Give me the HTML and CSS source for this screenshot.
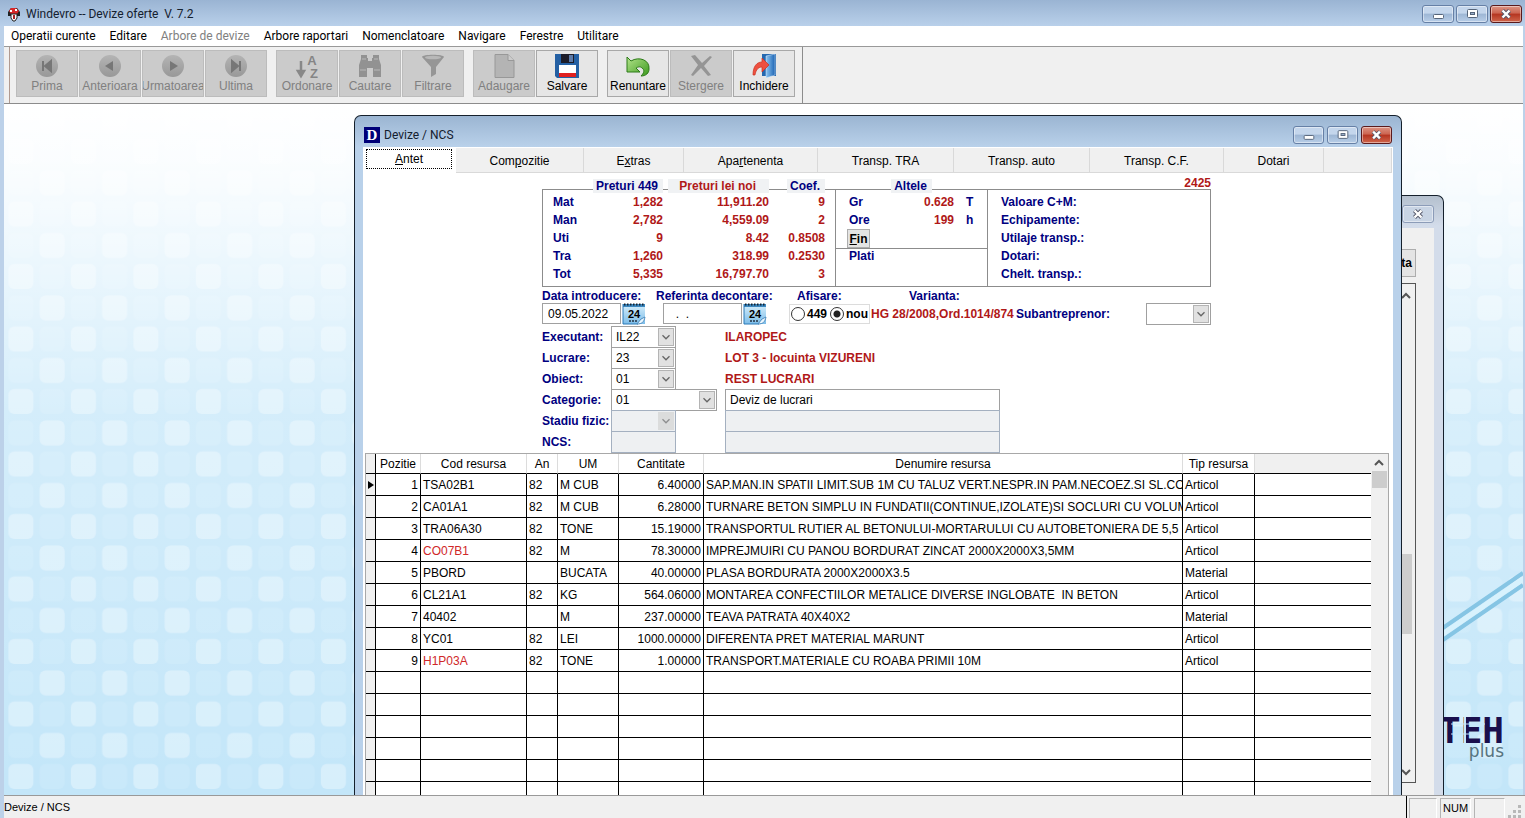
FILE: index.html
```html
<!DOCTYPE html>
<html lang="ro">
<head>
<meta charset="utf-8">
<title>Windevro -- Devize oferte V. 7.2</title>
<link rel="stylesheet" href="styles.css">
</head>
<body>
<svg width="0" height="0" class="defs" aria-hidden="true">
  <defs>
    <linearGradient id="ball" x1="0" y1="0" x2="0" y2="1"><stop offset="0" stop-color="#b4b4b4"/><stop offset="1" stop-color="#989898"/></linearGradient>
    <linearGradient id="leaf" x1="0" y1="0" x2="1" y2="1"><stop offset="0" stop-color="#b4e48c"/><stop offset="1" stop-color="#3c9a1e"/></linearGradient>
    <linearGradient id="door" x1="0" y1="0" x2="1" y2="0"><stop offset="0" stop-color="#8cc4f0"/><stop offset="1" stop-color="#1c64b4"/></linearGradient>
    <linearGradient id="page" x1="0" y1="0" x2="0" y2="1"><stop offset="0" stop-color="#d8f0fc"/><stop offset="1" stop-color="#7cbce8"/></linearGradient>
    <symbol id="chevron" viewBox="0 0 16 18"><path d="M4 7l4 4 4-4" fill="none" stroke="#666" stroke-width="1.5"/></symbol>
    <symbol id="min" viewBox="0 0 30 16"><rect x="10.500" y="8.500" width="10" height="4" rx="1" fill="#fff" stroke="#56657a"/></symbol>
    <symbol id="max" viewBox="0 0 30 16"><rect x="10.500" y="3.500" width="10" height="8" rx="1" fill="#fff" stroke="#56657a"/><rect x="13.500" y="6.500" width="4" height="2" fill="#9ab0cc" stroke="#56657a"/></symbol>
    <symbol id="close" viewBox="0 0 30 16"><path d="M11.500 4.500l7 7M18.500 4.500l-7 7" stroke="#55586a" stroke-width="4.200"/><path d="M11.500 4.500l7 7M18.500 4.500l-7 7" stroke="#fff" stroke-width="2.400"/></symbol>
    <symbol id="calendar" viewBox="0 0 24 22">
      <rect x="1" y="1" width="22" height="20" fill="url(#page)"/>
      <path d="M1 1h22v3H1z" fill="#3c88c0"/><path d="M2 1.500h20" stroke="#123" stroke-width="2" stroke-dasharray="1.500 1.500"/>
      <path d="M1 1v20h15" fill="none" stroke="#2a7ab8"/>
      <path d="M7 18h9" stroke="#234" stroke-width="1.500" stroke-dasharray="2 1"/>
      <path d="M15 21c5 0 7-2 8-7l-4 2z" fill="#eaf6fe" stroke="#4c8cc0"/>
      <text x="12" y="15" class="cal-day">24</text>
    </symbol>
  </defs>
</svg>

<header class="titlebar">
  <svg width="14" height="16" viewBox="0 0 14 16"><path d="M1 6l3-4h6l3 4v4H1z" fill="#222"/><path d="M2 5l2-3h5l3 3-2 3H4z" fill="#d82828"/><path d="M3 4h2v2H3zM8 3h2v2H8z" fill="#fff"/><path d="M4 8h6v4l-2 3H6l-2-3z" fill="#fff" stroke="#222"/><path d="M6 9h2v4H6z" fill="#a22"/></svg>
  <h1>Windevro -- Devize oferte&nbsp; V. 7.2</h1>
  <div class="winbtns">
    <button aria-label="Minimizare"><svg><use href="#min"/></svg></button>
    <button aria-label="Maximizare"><svg><use href="#max"/></svg></button>
    <button class="red" aria-label="Inchide"><svg><use href="#close"/></svg></button>
  </div>
</header>

<div class="app">
  <nav class="menubar">
    <button>Operatii curente</button><button>Editare</button><button disabled>Arbore de devize</button><button>Arbore raportari</button><button>Nomenclatoare</button><button>Navigare</button><button>Ferestre</button><button>Utilitare</button>
  </nav>

  <div class="toolbar">
    <div class="toolset">
      <div class="toolgroup">
        <button disabled><svg viewBox="0 0 26 26"><circle cx="13" cy="13" r="11" fill="url(#ball)"/><path d="M9 8v10M17 8l-6 5 6 5z" fill="#777" stroke="#777" stroke-width="2"/></svg><span>Prima</span></button>
        <button disabled><svg viewBox="0 0 26 26"><circle cx="13" cy="13" r="11" fill="url(#ball)"/><path d="M16 8l-8 5 8 5z" fill="#777"/></svg><span>Anterioara</span></button>
        <button disabled><svg viewBox="0 0 26 26"><circle cx="13" cy="13" r="11" fill="url(#ball)"/><path d="M10 8l8 5-8 5z" fill="#777"/></svg><span>Urmatoarea</span></button>
        <button disabled><svg viewBox="0 0 26 26"><circle cx="13" cy="13" r="11" fill="url(#ball)"/><path d="M17 8v10M9 8l6 5-6 5z" fill="#777" stroke="#777" stroke-width="2"/></svg><span>Ultima</span></button>
      </div>
      <div class="toolgroup">
        <button disabled><svg viewBox="0 0 26 26"><path d="M7 8v14M4 18l3 5 3-5z" stroke="#888" stroke-width="2.500" fill="#888"/><text x="18" y="12" class="az">A</text><text x="20" y="25" class="az">Z</text></svg><span>Ordonare</span></button>
        <button disabled><svg viewBox="0 0 26 26"><path d="M4 2h6v3h1v3h4V5h1V2h6v4l2 6v12h-8v-9h-6v9H2V12l2-6z" fill="#929292"/><path d="M3 17h6M17 17h6M5 6h4M17 6h4" stroke="#b8b8b8"/></svg><span>Cautare</span></button>
        <button disabled><svg viewBox="0 0 26 26"><path d="M2 4c0-3 22-3 22 0l-8 10v7l-5 3V14z" fill="#969696"/><ellipse cx="13" cy="4.500" rx="8" ry="1.800" fill="#b8b8b8"/></svg><span>Filtrare</span></button>
      </div>
      <div class="toolgroup">
        <button disabled><svg viewBox="0 0 26 26"><path d="M4 1.500h13l6 6v17H4z" fill="#b4b4b4" stroke="#989898"/><path d="M17 1.500v6h6" fill="#ccc" stroke="#989898"/></svg><span>Adaugare</span></button>
        <button><svg viewBox="0 0 26 26"><path d="M1 1h24v24H3l-2-2z" fill="#2460a4"/><path d="M7 1h13v9H7z" fill="#1c1c28"/><path d="M15 2h4v7h-4z" fill="#5c7aa8"/><path d="M5 12h17v8H5z" fill="#fff"/><path d="M5 20h17v4H5z" fill="#e02020"/></svg><span>Salvare</span></button>
      </div>
      <div class="toolgroup">
        <button><svg viewBox="0 0 26 26"><path d="M2 4l4 4c8-5 19-1 18 8 0 4-3 7-8 7 3-3 4-6 1-8-2-2-4-1-6 0l4 4H2z" fill="url(#leaf)" stroke="#2c7a18"/></svg><span>Renuntare</span></button>
        <button disabled><svg viewBox="0 0 26 26"><path d="M3 3l4-1 7 8 8-7 2 1-8 9 7 9-3 1-7-8-8 8-2-1 7-10z" fill="#959595"/></svg><span>Stergere</span></button>
        <button><svg viewBox="0 0 26 26"><path d="M11 1h14v22H11z" fill="#2468b0"/><path d="M15 3l9-2v21l-9 3z" fill="url(#door)" stroke="#dcecfc" stroke-width=".5"/><path d="M2 22C2 13 6 9 11 9V5l7 7-7 7v-5c-3 0-6 2-7 8z" fill="#ee5040" stroke="#c83020" stroke-width=".7"/></svg><span>Inchidere</span></button>
      </div>
    </div>
  </div>

  <main class="desktop">
    <svg class="wallpaper" width="100%" height="100%" aria-hidden="true">
      <defs>
        <pattern id="tiles" x="4.400" y="-2.500" width="62.500" height="62.500" patternUnits="userSpaceOnUse">
          <g fill="#fff">
            <rect x="0" y="6.500" width="25" height="25" rx="6" opacity=".1"/>
            <rect x="31.250" y="6.500" width="25" height="25" rx="6" opacity=".34"/>
            <rect x="0" y="37.500" width="25" height="25" rx="6" opacity=".34"/>
            <rect x="31.250" y="37.500" width="25" height="25" rx="6" opacity=".1"/>
          </g>
        </pattern>
        <linearGradient id="haze" x1="0" y1="0" x2="0" y2="1"><stop offset="0" stop-color="#fff"/><stop offset=".1" stop-color="#fff" stop-opacity=".9"/><stop offset=".45" stop-color="#fff" stop-opacity=".28"/><stop offset="1" stop-color="#fff" stop-opacity="0"/></linearGradient>
      </defs>
      <rect width="100%" height="100%" fill="#c3e6f9"/>
      <rect width="100%" height="100%" fill="url(#tiles)"/>
      <rect width="100%" height="100%" fill="url(#haze)"/>
    </svg>
    <svg class="brand" width="86" height="226" viewBox="0 0 86 226" role="img" aria-label="TEH plus">
      <path d="M0 63L86 4M0 75L86 16" stroke="#86c5e4" stroke-width="4"/><path d="M0 69L86 10" stroke="#d8f2fd" stroke-width="5"/>
      <text x="67" y="174" class="brand-name">TEH</text>
      <path d="M14 155h34M14 165h30" stroke="#c6e7f9" stroke-width="1"/><path d="M28 148v26" stroke="#c6e7f9" stroke-width="2"/>
      <text x="67" y="188" class="brand-sub">plus</text>
    </svg>

    <section class="window back" aria-label="Lista">
      <div class="winbtns"><button aria-label="Inchide"><svg><use href="#close"/></svg></button></div>
      <div class="back-client">
        <button class="back-btn">ta</button>
        <div class="back-list">
          <svg width="12" height="12" viewBox="0 0 12 12"><path d="M2 8l4-4 4 4" fill="none" stroke="#555" stroke-width="2"/></svg>
          <div class="back-thumb"></div>
          <svg width="12" height="12" viewBox="0 0 12 12"><path d="M2 4l4 4 4-4" fill="none" stroke="#555" stroke-width="2"/></svg>
        </div>
      </div>
    </section>

    <section class="window front" aria-label="Devize / NCS">
      <div class="wintitle">
        <span class="dlogo">D</span><h2>Devize / NCS</h2>
        <div class="winbtns">
          <button aria-label="Minimizare"><svg><use href="#min"/></svg></button>
          <button aria-label="Maximizare"><svg><use href="#max"/></svg></button>
          <button class="red" aria-label="Inchide"><svg><use href="#close"/></svg></button>
        </div>
      </div>
      <div class="client">
        <div class="tabs" role="tablist">
          <button role="tab" aria-selected="true" class="t1"><span><u>A</u>ntet</span></button>
          <button role="tab" class="t2">Com<u>p</u>ozitie</button>
          <button role="tab" class="t3">E<u>x</u>tras</button>
          <button role="tab" class="t4">Apa<u>r</u>tenenta</button>
          <button role="tab" class="t5">Transp. TRA</button>
          <button role="tab" class="t5">Transp. auto</button>
          <button role="tab" class="t4">Transp. C.F.</button>
          <button role="tab" class="t3">Dotari</button>
          <i></i>
        </div>

        <div class="sheet">
          <div class="number">2425</div>
          <div class="summary">
            <table class="prices">
              <colgroup><col class="p0"><col class="p1"><col class="p2"><col class="p3"></colgroup>
              <thead><tr><td></td><th><span class="cap">Preturi 449</span></th><th><span class="cap wide">Preturi lei noi</span></th><th><span class="cap">Coef.</span></th></tr></thead>
              <tbody>
                <tr><th>Mat</th><td>1,282</td><td>11,911.20</td><td>9</td></tr>
                <tr><th>Man</th><td>2,782</td><td>4,559.09</td><td>2</td></tr>
                <tr><th>Uti</th><td>9</td><td>8.42</td><td>0.8508</td></tr>
                <tr><th>Tra</th><td>1,260</td><td>318.99</td><td>0.2530</td></tr>
                <tr><th>Tot</th><td>5,335</td><td>16,797.70</td><td>3</td></tr>
              </tbody>
            </table>
            <div class="others">
              <div class="others-head"><span class="cap">Altele</span></div>
              <div class="measure"><span>Gr</span><b>0.628</b><span>T</span></div>
              <div class="measure"><span>Ore</span><b>199</b><span>h</span></div>
              <div class="fin-row"><button class="fin"><u>F</u>in</button></div>
              <div class="plati">Plati</div>
            </div>
            <ul class="values"><li>Valoare C+M:</li><li>Echipamente:</li><li>Utilaje transp.:</li><li>Dotari:</li><li>Chelt. transp.:</li></ul>
          </div>

          <div class="dates">
            <label for="d1">Data introducere:</label><label for="d2">Referinta decontare:</label><span class="l3">Afisare:</span><span class="l4">Varianta:</span><span></span><span></span>
            <div class="datebox"><input id="d1" type="text" value="09.05.2022"><button aria-label="Calendar"><svg><use href="#calendar"/></svg></button></div>
            <div class="datebox shift"><input id="d2" type="text" value="  .  ."><button aria-label="Calendar"><svg><use href="#calendar"/></svg></button></div>
            <div class="radios"><label><input type="radio" name="af">449</label><label><input type="radio" name="af" checked>nou</label></div>
            <span class="red-text">HG 28/2008,Ord.1014/874</span>
            <label for="sub">Subantreprenor:</label>
            <div class="combo"><select id="sub"><option></option></select><svg><use href="#chevron"/></svg></div>
          </div>

          <div class="fields">
            <label for="f1">Executant:</label><div class="combo"><select id="f1"><option>IL22</option></select><svg><use href="#chevron"/></svg></div><span class="red-text">ILAROPEC</span>
            <label for="f2">Lucrare:</label><div class="combo"><select id="f2"><option>23</option></select><svg><use href="#chevron"/></svg></div><span class="red-text">LOT 3 - locuinta VIZURENI</span>
            <label for="f3">Obiect:</label><div class="combo"><select id="f3"><option>01</option></select><svg><use href="#chevron"/></svg></div><span class="red-text">REST LUCRARI</span>
            <label for="f4">Categorie:</label><div class="combo large"><select id="f4"><option>01</option></select><svg><use href="#chevron"/></svg></div><input type="text" aria-label="Descriere categorie" value="Deviz de lucrari">
            <label for="f5">Stadiu fizic:</label><div class="combo off"><select id="f5" disabled><option></option></select><svg><use href="#chevron"/></svg></div><input type="text" aria-label="Descriere stadiu" disabled>
            <label for="f6">NCS:</label><input id="f6" class="short" type="text" disabled><input type="text" aria-label="Descriere NCS" disabled>
          </div>

          <div class="gridbox">
            <table class="grid">
              <colgroup><col class="g0"><col class="g1"><col class="g2"><col class="g3"><col class="g4"><col class="g5"><col class="g6"><col class="g7"><col></colgroup>
              <thead><tr><th></th><th>Pozitie</th><th>Cod resursa</th><th>An</th><th>UM</th><th>Cantitate</th><th>Denumire resursa</th><th>Tip resursa</th><th class="blank"></th></tr></thead>
              <tbody>
                <tr><td><svg class="marker" width="6" height="8" viewBox="0 0 6 8"><path d="M0 0l6 4-6 4z"/></svg></td><td>1</td><td>TSA02B1</td><td>82</td><td>M CUB</td><td>6.40000</td><td>SAP.MAN.IN SPATII LIMIT.SUB 1M CU TALUZ VERT.NESPR.IN PAM.NECOEZ.SI SL.COE</td><td>Articol</td><td></td></tr>
                <tr><td></td><td>2</td><td>CA01A1</td><td>82</td><td>M CUB</td><td>6.28000</td><td>TURNARE BETON SIMPLU IN FUNDATII(CONTINUE,IZOLATE)SI SOCLURI CU VOLUM</td><td>Articol</td><td></td></tr>
                <tr><td></td><td>3</td><td>TRA06A30</td><td>82</td><td>TONE</td><td>15.19000</td><td>TRANSPORTUL RUTIER AL BETONULUI-MORTARULUI CU AUTOBETONIERA DE 5,5</td><td>Articol</td><td></td></tr>
                <tr><td></td><td>4</td><td class="hot">CO07B1</td><td>82</td><td>M</td><td>78.30000</td><td>IMPREJMUIRI CU PANOU BORDURAT ZINCAT 2000X2000X3,5MM</td><td>Articol</td><td></td></tr>
                <tr><td></td><td>5</td><td>PBORD</td><td></td><td>BUCATA</td><td>40.00000</td><td>PLASA BORDURATA 2000X2000X3.5</td><td>Material</td><td></td></tr>
                <tr><td></td><td>6</td><td>CL21A1</td><td>82</td><td>KG</td><td>564.06000</td><td>MONTAREA CONFECTIILOR METALICE DIVERSE INGLOBATE&nbsp; IN BETON</td><td>Articol</td><td></td></tr>
                <tr><td></td><td>7</td><td>40402</td><td></td><td>M</td><td>237.00000</td><td>TEAVA PATRATA 40X40X2</td><td>Material</td><td></td></tr>
                <tr><td></td><td>8</td><td>YC01</td><td>82</td><td>LEI</td><td>1000.00000</td><td>DIFERENTA PRET MATERIAL MARUNT</td><td>Articol</td><td></td></tr>
                <tr><td></td><td>9</td><td class="hot">H1P03A</td><td>82</td><td>TONE</td><td>1.00000</td><td>TRANSPORT.MATERIALE CU ROABA PRIMII 10M</td><td>Articol</td><td></td></tr>
                <tr><td></td><td></td><td></td><td></td><td></td><td></td><td></td><td></td><td></td></tr>
                <tr><td></td><td></td><td></td><td></td><td></td><td></td><td></td><td></td><td></td></tr>
                <tr><td></td><td></td><td></td><td></td><td></td><td></td><td></td><td></td><td></td></tr>
                <tr><td></td><td></td><td></td><td></td><td></td><td></td><td></td><td></td><td></td></tr>
                <tr><td></td><td></td><td></td><td></td><td></td><td></td><td></td><td></td><td></td></tr>
                <tr><td></td><td></td><td></td><td></td><td></td><td></td><td></td><td></td><td></td></tr>
              </tbody>
            </table>
            <div class="scroll"><svg width="16" height="17" viewBox="0 0 16 17"><path d="M4 11l4-4 4 4" fill="none" stroke="#555" stroke-width="2"/></svg><div class="thumb"></div></div>
          </div>
        </div>
      </div>
    </section>
  </main>
</div>

<footer class="status">
  <span class="status-text">Devize / NCS</span>
  <div class="panels"><span class="narrow"></span><span>NUM</span><span></span><svg width="14" height="14" viewBox="0 0 14 14" fill="#b8b8b8"><path d="M10 1h3v3h-3zM5 6h3v3H5zM10 6h3v3h-3zM0 11h3v3H0zM5 11h3v3H5zM10 11h3v3h-3z"/></svg></div>
</footer>
</body>
</html>
```

FILE: styles.css
```css
* { box-sizing: border-box; }

body {
  margin: 0;
  height: 100vh;
  display: flex;
  flex-direction: column;
  overflow: hidden;
  background: #bcd1e9;
  color: #000;
  font: 12px/14px "Liberation Sans", Arial, sans-serif;
}

button, input, select { font: inherit; color: inherit; margin: 0; padding: 0; border-radius: 0; }
h1, h2 { margin: 0; font: 12px/16px Roboto, "Open Sans", sans-serif; color: #14202e; }
svg { display: block; flex: none; }
.defs { position: absolute; }

/* Title bars */
.titlebar {
  display: flex;
  align-items: center;
  gap: 5px;
  height: 26px;
  padding: 2px 3px 0 7px;
  background: linear-gradient(#9ab4d3, #b9d0ea);
}
.winbtns { display: flex; gap: 2px; margin-left: auto; }
.winbtns button {
  width: 32px;
  height: 18px;
  border: 1px solid #6680a6;
  border-radius: 3px;
  background: linear-gradient(#c4d6ec 45%, #9db6d4 50%, #b8cee8);
  box-shadow: inset 0 0 0 1px rgba(255, 255, 255, .45);
}
.winbtns button.red {
  border-color: #5a1a1c;
  background: linear-gradient(#dc9484, #cc6450 45%, #b43420 50%, #d0664c);
}
.winbtns svg { width: 30px; height: 16px; }

.app {
  flex: 1;
  min-height: 0;
  display: flex;
  flex-direction: column;
  margin: 0 2px 0 4px;
}

.menubar {
  display: flex;
  gap: 14px;
  height: 21px;
  padding: 0 7px;
  background: #fff;
  border-bottom: 1px solid #999;
}
.menubar button {
  border: 0;
  background: none;
  font: 12px/18px Roboto, "Open Sans", sans-serif;
}
.menubar button:disabled { color: #808080; }

.toolbar {
  height: 57px;
  padding-left: 5px;
  background: #f0f0f0;
  border-bottom: 1px solid #8c8c8c;
}
.toolset {
  display: flex;
  gap: 9px;
  width: max-content;
  height: 56px;
  padding: 3px 7px 6px 6px;
  border-left: 1px solid #b09a90;
  border-right: 1px solid #8c8c8c;
}
.toolgroup { display: flex; gap: 1px; }
.toolgroup button {
  display: flex;
  flex-direction: column;
  align-items: center;
  width: 62px;
  height: 47px;
  padding: 2px 1px 0;
  overflow: hidden;
  border: 1px solid #a8a8a8;
  background: #e6e6e6;
}
.toolgroup button:disabled { background: #cbcbcb; color: #808080; border-color: #bcbcbc; }
.toolgroup svg { width: 26px; height: 26px; }
.az { font: bold 13px "Liberation Sans", Arial, sans-serif; fill: #858585; text-anchor: middle; }

/* Workspace */
.desktop { position: relative; flex: 1; min-height: 0; overflow: hidden; background: #fff; }
.wallpaper { position: absolute; inset: 0; }
.brand { position: absolute; right: 0; bottom: 0; }
.brand-name { font: bold 36px "DejaVu Sans Mono", monospace; fill: #1a0f4c; text-anchor: end; }
.brand-sub { font: 17px "DejaVu Sans", sans-serif; fill: #57747f; text-anchor: end; }

.window {
  position: absolute;
  bottom: 0;
  border: 1px solid #15202c;
  border-bottom: 0;
  border-radius: 7px 7px 0 0;
}
.back {
  top: 91px;
  left: 900px;
  right: 79px;
  display: flex;
  flex-direction: column;
  padding: 9px 9px 0;
  background: linear-gradient(#b4c0ce, #d3dcea 30px);
}
.back .winbtns button { background: #c8d4e4; border-color: #8c9cb8; }
.back-client {
  flex: 1;
  min-height: 0;
  margin-top: 5px;
  padding: 21px 18px 12px 0;
  display: flex;
  flex-direction: column;
  align-items: flex-end;
  gap: 6px;
  background: #f0f0f0;
}
.back-btn {
  flex: none;
  width: 60px;
  height: 28px;
  padding-right: 3px;
  border: 1px solid #adadad;
  background: #e4e4e4;
  font-weight: bold;
  text-align: right;
}
.back-list {
  flex: 1;
  display: flex;
  flex-direction: column;
  align-items: flex-end;
  justify-content: space-between;
  width: 100%;
  padding: 6px 3px 4px;
  border: 1px solid #555;
}
.back-thumb { width: 16px; height: 80px; margin-top: 120px; background: #cdcdcd; }

.front {
  top: 11px;
  left: 350px;
  right: 121px;
  display: flex;
  flex-direction: column;
  padding: 0 8px;
  background: linear-gradient(#9bb5d2, #b9d1ea 31px);
}
.wintitle { display: flex; align-items: center; gap: 4px; height: 31px; padding: 6px 1px 0; }
.wintitle .winbtns { gap: 3px; }
.wintitle .winbtns button { width: 31px; }
.wintitle .winbtns svg { width: 29px; }
.dlogo {
  width: 16px;
  height: 16px;
  background: #000078;
  color: #fff;
  font: bold 15px/16px "Liberation Serif", serif;
  text-align: center;
}
.client { flex: 1; min-height: 0; display: flex; flex-direction: column; background: #fff; }

.tabs { display: flex; height: 26px; padding-right: 1px; }
.tabs button, .tabs i {
  border: 0;
  border-right: 1px solid #d9d9d9;
  border-bottom: 1px solid #d9d9d9;
  margin-top: 1px;
  padding-top: 2px;
  background: #f0f0f0;
}
.tabs i { flex: 1; }
.tabs .t1 { width: 93px; padding: 1px 4px 0 3px; border: 0; margin: 0; background: #fff; }
.tabs .t1 span { display: block; height: 20px; margin-bottom: 4px; border: 1px dotted #000; line-height: 18px; }
.t2 { width: 128px; }
.t3 { width: 100px; }
.t4 { width: 134px; }
.t5 { width: 136px; }

/* Sheet */
.sheet { flex: 1; min-height: 0; display: flex; flex-direction: column; }
.number, .summary, .dates, .fields { margin-left: 179px; width: 669px; color: #000080; font-weight: bold; }
.number { flex: none; height: 16px; line-height: 20px; text-align: right; color: #b01818; }

.summary { display: grid; grid-template-columns: 292px 153px 1fr; border: 1px solid #8c8c8c; padding-bottom: 3px; }
.prices {
  table-layout: fixed;
  width: 282px;
  margin-top: -11px;
  border-collapse: collapse;
}
.prices tbody tr { height: 18px; }
.prices tr { height: 14px; }
.prices th, .prices td { padding: 0; text-align: right; }
.prices td { color: #b01818; }
.prices tbody th { padding-left: 10px; text-align: left; }
.p0 { width: 49px; }
.p1 { width: 71px; }
.p2 { width: 106px; }
.p3 { width: 56px; }
.cap { display: inline-block; padding: 0 5px 0 3px; background: #f0f2f4; }
.cap.wide { padding: 0 13px 0 11px; color: #b01818; }

.others { margin-bottom: -3px; border: 1px solid #8c8c8c; border-width: 0 1px; }
.others-head { margin-top: -11px; text-align: center; }
.measure { display: grid; grid-template-columns: 30px 75px 1fr; padding-left: 13px; line-height: 18px; }
.measure b { text-align: right; color: #b01818; }
.measure span:last-child { padding-left: 12px; }
.fin-row { height: 20px; padding-left: 11px; border-bottom: 1px solid #8c8c8c; }
.fin { display: block; width: 23px; height: 19px; border: 1px solid #adadad; background: #e4e4e4; color: #000; font-weight: bold; }
.plati { padding-left: 13px; }
.values { margin: 3px 0 0; padding: 0 0 0 13px; list-style: none; line-height: 18px; }

.dates {
  display: grid;
  grid-template-columns: 114px 133px 82px 145px 130px 65px;
  grid-template-rows: 14px 21px;
  align-items: center;
  padding-top: 2px;
  white-space: nowrap;
}
.l3 { padding-left: 8px; }
.l4 { padding-left: 38px; }
.datebox { display: flex; align-items: center; gap: 1px; }
.shift { padding-left: 7px; }
.datebox input { width: 79px; height: 21px; padding-left: 5px; color: #000; white-space: pre; }
.datebox button { border: 0; background: none; width: 24px; height: 22px; }
.datebox svg { width: 24px; height: 22px; }
.cal-day { font: bold 11px "Liberation Sans", Arial, sans-serif; text-anchor: middle; fill: #000; }
.radios { display: flex; gap: 3px; align-items: center; width: 81px; height: 20px; padding-left: 1px; border: 1px solid #dcdcdc; color: #000; }
.radios label { display: flex; align-items: center; gap: 2px; }
.radios input { appearance: none; width: 14px; height: 14px; border: 1px solid #333; border-radius: 50%; background: #fff; }
.radios input:checked { background: radial-gradient(circle, #222 3px, #fff 4px); }
.red-text { color: #b01818; }

.fields {
  display: grid;
  grid-template-columns: 69px 114px 275px;
  grid-auto-rows: 21px;
  align-items: center;
  padding: 2px 0 1px;
}
input[type="text"], select { border: 1px solid #a0a0a0; background: #fff; font-weight: normal; }
.fields input { height: 22px; padding-left: 4px; color: #000; }
.fields input:disabled, select:disabled { background: #eef0f2; border-color: #a4b0c0; opacity: 1; }
.short { width: 65px; }
.combo { position: relative; width: 65px; height: 22px; }
.combo.large { width: 106px; }
.combo select { appearance: none; width: 100%; height: 22px; padding-left: 4px; color: #000; }
.combo svg { position: absolute; right: 2px; top: 2px; width: 16px; height: 18px; background: #e1e1e1; border: 1px solid #b4b4b4; pointer-events: none; }
.combo.off svg { background: #d4d4d4; border-color: #d4d4d4; opacity: .7; }

/* Resource grid */
.gridbox {
  flex: 1;
  min-height: 0;
  display: flex;
  align-items: stretch;
  margin: 0 4px 0 2px;
  border: 1px solid #a8a8a8;
  border-bottom: 0;
  overflow: hidden;
}
.grid { flex: 1; width: 0; table-layout: fixed; border-collapse: separate; border-spacing: 0; align-self: flex-start; }
.grid tr { height: 22px; }
.grid thead tr { height: 20px; }
.grid th, .grid td { padding: 0 2px; overflow: hidden; white-space: nowrap; border-bottom: 1px solid #000; border-right: 1px solid #000; text-align: left; }
.grid th { padding: 0; font-weight: normal; text-align: center; border-right-color: #dcdcdc; }
.grid th.blank, .grid th:first-child, .grid td:first-child { background: #f0f0f0; }
.grid th:first-child { border-right-color: #000; }
.grid tr > :last-child { border-right: 0; }
.grid td:nth-child(2), .grid td:nth-child(6) { text-align: right; }
.grid td:nth-child(7) { padding-right: 0; }
.grid td.hot { color: #d02828; }
.g0 { width: 10px; }
.g1 { width: 45px; }
.g2 { width: 106px; }
.g3 { width: 31px; }
.g4 { width: 61px; }
.g5 { width: 85px; }
.g6 { width: 479px; }
.g7 { width: 72px; }
.scroll { width: 17px; background: #f0f0f0; }
.thumb { width: 15px; height: 17px; margin-left: 1px; background: #cdcdcd; }

/* Status bar */
.status {
  display: flex;
  height: 23px;
  margin-left: 4px;
  background: #f0f0f0;
  border-top: 1px solid #999;
  font-size: 11px;
}
.status-text { flex: 1; line-height: 23px; }
.panels { display: flex; align-items: stretch; gap: 3px; padding: 2px 3px 0 2px; border-left: 1px solid #000; }
.panels span { width: 31px; padding-left: 2px; line-height: 19px; border: 1px solid #b4b4b4; border-right-color: #fff; border-bottom: 0; }
.panels .narrow { width: 28px; }
.panels svg { align-self: flex-end; }
```
